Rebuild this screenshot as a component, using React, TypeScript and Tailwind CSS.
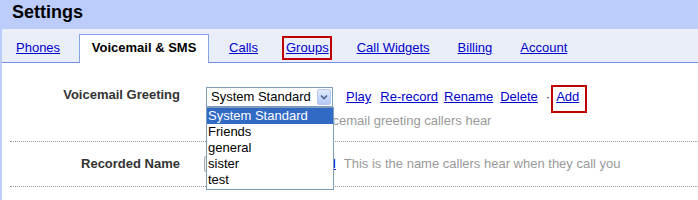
import React from "react";

const tabs = [
  { label: "Phones", ml: "ml-[14px]" },
  { label: "Voicemail & SMS", active: true },
  { label: "Calls", ml: "ml-[20px]" },
  { label: "Groups", ml: "ml-[28px]", boxed: true },
  { label: "Call Widgets", ml: "ml-[28px]" },
  { label: "Billing", ml: "ml-[28px]" },
  { label: "Account", ml: "ml-[28px]" },
];

const greetings = ["System Standard", "Friends", "general", "sister", "test"];

export default function App() {
  return (
    <div className="w-[698px] h-[200px] overflow-hidden bg-[#bdcdfb] font-['Liberation_Sans',Arial,sans-serif] text-[13px]">
      {/* Header */}
      <div className="h-[29px] pl-[12px] text-[18px] font-bold leading-[24px] text-black">Settings</div>

      <div className="ml-[2px] h-[171px] bg-white">
        {/* Tabs */}
        <div className="flex h-[34px] items-start border-b border-[#6f93e2] bg-[#e9eef9] pt-[5px] leading-[16px]">
          {tabs.map((t) =>
            t.active ? (
              <div
                key={t.label}
                className="relative z-10 ml-[19px] h-[29px] w-[130px] shrink-0 border border-b-0 border-[#86a4e6] bg-white pt-[5px] text-center font-bold text-black"
              >
                {t.label}
              </div>
            ) : (
              <span key={t.label} className={`relative mt-[6px] ${t.ml}`}>
                <a href="#" className="text-[#0000cc] underline">
                  {t.label}
                </a>
                {t.boxed && (
                  <span className="absolute -left-[4px] -right-[3px] -top-[4px] -bottom-[4px] border-2 border-[#c00000]" />
                )}
              </span>
            )
          )}
        </div>

        {/* Content */}
        <div className="pl-[8px] leading-[16px]">
          {/* Voicemail Greeting */}
          <div className="flex h-[79px] items-start border-b border-dotted border-[#999] pt-[24px]">
            <div className="w-[170px] text-right font-bold text-[#333]">Voicemail Greeting</div>
            <div className="ml-[26px] flex flex-col">
              <div className="flex items-center">
                <div className="relative">
                  <div className="relative h-[20px] w-[127px] border border-[#7f9db9] bg-white pl-[4px] leading-[18px] text-black">
                    System Standard
                    <span className="absolute right-[1px] top-[1px] flex h-[16px] w-[14px] items-center justify-center rounded-[2px] border border-[#b5c8f5] bg-gradient-to-b from-[#e1eafe] to-[#b4c8f7]">
                      <svg width="8" height="6" viewBox="0 0 8 6">
                        <path d="M1 1.5 L4 4.5 L7 1.5" fill="none" stroke="#4d6185" strokeWidth="1.6" />
                      </svg>
                    </span>
                  </div>
                  {/* Open list */}
                  <div className="absolute left-0 top-[20px] z-20 w-[128px] border border-[#7f9db9] bg-white pb-[1px] text-black">
                    {greetings.map((g, i) => (
                      <div
                        key={g}
                        className={`h-[16px] pl-[1px] leading-[16px] ${i === 0 ? "bg-[#316ac5] text-white" : ""}`}
                      >
                        {g}
                      </div>
                    ))}
                  </div>
                </div>
                <div className="ml-[13px] flex items-center text-[#0000cc]">
                  <a href="#" className="underline">Play</a>
                  <a href="#" className="ml-[9px] underline">Re-record</a>
                  <a href="#" className="ml-[6px] underline">Rename</a>
                  <a href="#" className="ml-[7px] underline">Delete</a>
                  <span className="ml-[8px] text-[#333]">·</span>
                  <span className="relative ml-[6px]">
                    <a href="#" className="underline">Add</a>
                    <span className="absolute -left-[5px] -right-[8px] -top-[4px] -bottom-[8px] border-2 border-[#c00000]" />
                  </span>
                </div>
              </div>
              <div className="mt-[6px] pl-[47px] text-[#999]">This is the voicemail greeting callers hear</div>
            </div>
          </div>

          {/* Recorded Name */}
          <div className="flex h-[45px] items-center border-b border-dotted border-[#999]">
            <div className="w-[170px] text-right font-bold text-[#333]">Recorded Name</div>
            <div className="ml-[24px] flex items-center">
              <span className="h-[16px] w-[60px] rounded-[2px] border border-[#aaa] bg-[#f0f0f0]" />
              <a href="#" className="ml-[14px] text-[#0000cc] underline">Re-record</a>
              <span className="ml-[8px] text-[#999]">This is the name callers hear when they call you</span>
            </div>
          </div>
        </div>
      </div>
    </div>
  );
}
